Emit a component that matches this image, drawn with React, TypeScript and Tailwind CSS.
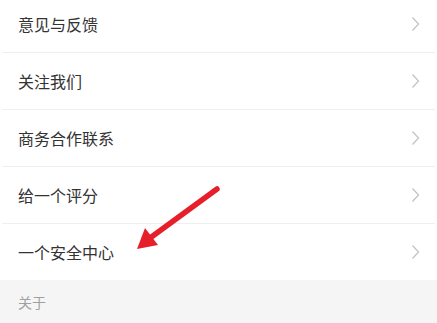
import React from 'react';

const items = ['意见与反馈', '关注我们', '商务合作联系', '给一个评分', '一个安全中心'];

function Chevron() {
  return (
    <svg width="9" height="16" viewBox="0 0 9 16" className="shrink-0">
      <path d="M1.5 1.5 L7.5 8 L1.5 14.5" fill="none" stroke="#c4c4c4" strokeWidth="1.3" />
    </svg>
  );
}

export default function App() {
  return (
    <div
      className="relative w-[437px] h-[323px] overflow-hidden bg-white"
      style={{ fontFamily: '"Noto Sans CJK SC", "Noto Sans", sans-serif' }}
    >
      <div className="-mt-[4px]">
        {items.map((label) => (
          <div
            key={label}
            className="flex items-center justify-between h-[57px] pl-[18px] pr-[15px] border-b border-[#efefef] mx-[2px]"
          >
            <span className="text-[16px] text-[#333333] -ml-[2px]">{label}</span>
            <Chevron />
          </div>
        ))}
        <div className="flex items-center h-[44px] -mt-[1px] bg-[#f5f5f5] pl-[18px]">
          <span className="text-[14px] text-[#a0a0a0]">关于</span>
        </div>
      </div>

      {/* red annotation arrow */}
      <svg
        className="absolute left-0 top-0 pointer-events-none"
        width="437"
        height="323"
        viewBox="0 0 437 323"
      >
        <line x1="217" y1="189" x2="150" y2="238" stroke="#e5202b" strokeWidth="5.5" strokeLinecap="round" />
        <polygon points="137,249 145,228 158,245" fill="#e5202b" />
      </svg>
    </div>
  );
}
